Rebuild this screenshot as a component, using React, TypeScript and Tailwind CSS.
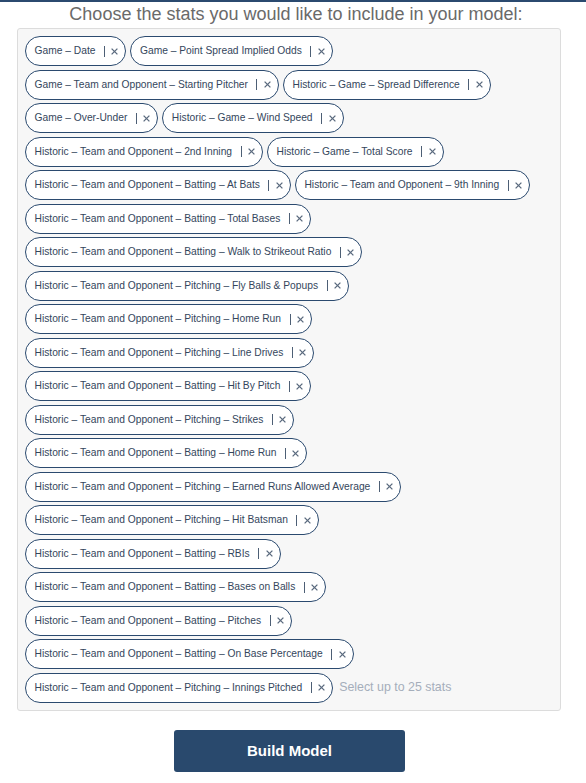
const STATS = [
  'Game - Date',
  'Game - Point Spread Implied Odds',
  'Game - Team and Opponent - Starting Pitcher',
  'Historic - Game - Spread Difference',
  'Game - Over-Under',
  'Historic - Game - Wind Speed',
  'Historic - Team and Opponent - 2nd Inning',
  'Historic - Game - Total Score',
  'Historic - Team and Opponent - Batting - At Bats',
  'Historic - Team and Opponent - 9th Inning',
  'Historic - Team and Opponent - Batting - Total Bases',
  'Historic - Team and Opponent - Batting - Walk to Strikeout Ratio',
  'Historic - Team and Opponent - Pitching - Fly Balls & Popups',
  'Historic - Team and Opponent - Pitching - Home Run',
  'Historic - Team and Opponent - Pitching - Line Drives',
  'Historic - Team and Opponent - Batting - Hit By Pitch',
  'Historic - Team and Opponent - Pitching - Strikes',
  'Historic - Team and Opponent - Batting - Home Run',
  'Historic - Team and Opponent - Pitching - Earned Runs Allowed Average',
  'Historic - Team and Opponent - Pitching - Hit Batsman',
  'Historic - Team and Opponent - Batting - RBIs',
  'Historic - Team and Opponent - Batting - Bases on Balls',
  'Historic - Team and Opponent - Batting - Pitches',
  'Historic - Team and Opponent - Batting - On Base Percentage',
  'Historic - Team and Opponent - Pitching - Innings Pitched',
];

function Chip({ label }: { label: string }) {
  return (
    <div className="flex items-center h-[30px] rounded-full border-[1.5px] border-[#2b4a6f] bg-white pl-[8.5px] pr-[7px]">
      <span className="text-[10.25px] text-[#34465c] whitespace-nowrap">{label.replace(/ - /g, ' – ')}</span>
      <span className="ml-[8.5px] w-px h-[11px] bg-[#4d5f75]" />
      <svg className="ml-[6.5px]" width="7" height="7" viewBox="0 0 7 7">
        <path d="M0.6 0.6 L6.4 6.4 M6.4 0.6 L0.6 6.4" stroke="#5a6a7e" strokeWidth="1.3" />
      </svg>
    </div>
  );
}

export default function App() {
  return (
    <div className="w-[586px] h-[783px] bg-white border-t-2 border-[#2b4a6f] font-['Liberation_Sans',Arial,sans-serif]">
      <h2 className="text-center text-[18px] text-[#6a6a6a] leading-[20px] pt-[2px] pl-[6px]">
        Choose the stats you would like to include in your model:
      </h2>
      <div className="ml-[17px] w-[544px] mt-[4px] h-[683px] bg-[#f7f7f7] border border-[#dcdcdc] rounded-[3px] px-[7px] pt-[7px]">
        <div className="flex flex-wrap gap-x-[4px] gap-y-[3.5px]">
          {STATS.map(s => <Chip key={s} label={s} />)}
          <span className="self-center ml-[2px] text-[12.4px] text-[#a5aebb]">Select up to 25 stats</span>
        </div>
      </div>
      <div className="flex mt-[19px] pl-[174px]">
        <button className="w-[231px] h-[42px] rounded-[3px] bg-[#29496d] text-white text-[15px] font-bold">
          Build Model
        </button>
      </div>
    </div>
  );
}
